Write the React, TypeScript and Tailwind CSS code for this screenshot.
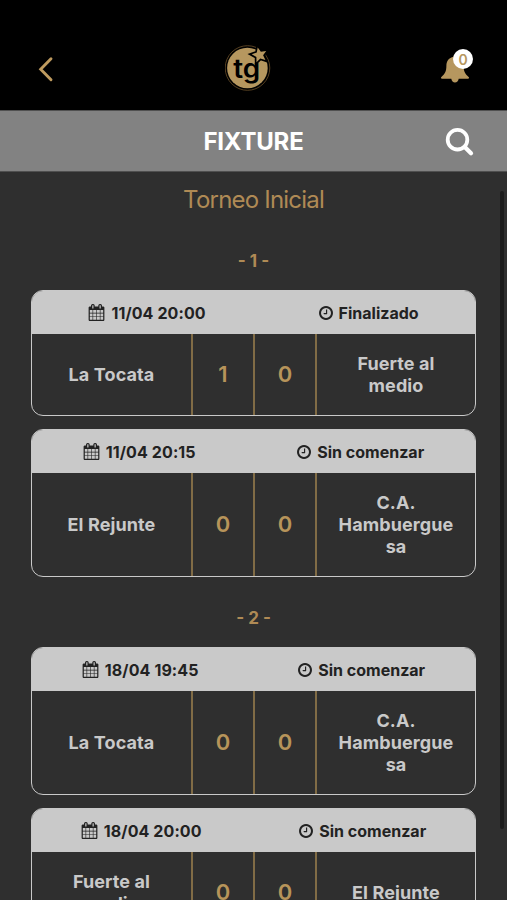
type Match = {
  date: string;
  status: string;
  home: string[];
  away: string[];
  homeGoals: number;
  awayGoals: number;
  bodyClass: string;
};

type Round = {
  id: number;
  matches: Match[];
};

const rounds: Round[] = [
  {
    id: 1,
    matches: [
      {
        date: "11/04 20:00",
        status: "Finalizado",
        home: ["La Tocata"],
        away: ["Fuerte al", "medio"],
        homeGoals: 1,
        awayGoals: 0,
        bodyClass: "h-[81px]",
      },
      {
        date: "11/04 20:15",
        status: "Sin comenzar",
        home: ["El Rejunte"],
        away: ["C.A.", "Hambuergue", "sa"],
        homeGoals: 0,
        awayGoals: 0,
        bodyClass: "h-[103px]",
      },
    ],
  },
  {
    id: 2,
    matches: [
      {
        date: "18/04 19:45",
        status: "Sin comenzar",
        home: ["La Tocata"],
        away: ["C.A.", "Hambuergue", "sa"],
        homeGoals: 0,
        awayGoals: 0,
        bodyClass: "h-[103px]",
      },
      {
        date: "18/04 20:00",
        status: "Sin comenzar",
        home: ["Fuerte al", "medio"],
        away: ["El Rejunte"],
        homeGoals: 0,
        awayGoals: 0,
        bodyClass: "h-[81px]",
      },
    ],
  },
];

const CalendarIcon = () => (
  <svg viewBox="0 0 1792 1792" className="w-[17px] h-[17px] shrink-0 mb-[2px]" fill="currentColor">
    <path d="M192 1664h288v-288h-288v288zm352 0h320v-288h-320v288zm-352-352h288v-320h-288v320zm352 0h320v-320h-320v320zm-352-384h288v-288h-288v288zm736 736h320v-288h-320v288zm-384-736h320v-288h-320v288zm768 736h288v-288h-288v288zm-384-352h320v-320h-320v320zm-352-864v-288q0-13-9.5-22.5t-22.5-9.5h-64q-13 0-22.5 9.5t-9.5 22.5v288q0 13 9.5 22.5t22.5 9.5h64q13 0 22.5-9.5t9.5-22.5zm736 864h288v-320h-288v320zm-384-384h320v-288h-320v288zm384 0h288v-288h-288v288zm32-480v-288q0-13-9.5-22.5t-22.5-9.5h-64q-13 0-22.5 9.5t-9.5 22.5v288q0 13 9.5 22.5t22.5 9.5h64q13 0 22.5-9.5t9.5-22.5zm384-64v1280q0 52-38 90t-90 38h-1408q-52 0-90-38t-38-90v-1280q0-52 38-90t90-38h128v-96q0-66 47-113t113-47h64q66 0 113 47t47 113v96h384v-96q0-66 47-113t113-47h64q66 0 113 47t47 113v96h128q52 0 90 38t38 90z" />
  </svg>
);

const ClockIcon = () => (
  <svg viewBox="128 128 1536 1536" className="w-[14px] h-[14px] shrink-0" fill="currentColor">
    <path d="M1024 544v448q0 14-9 23t-23 9h-320q-14 0-23-9t-9-23v-64q0-14 9-23t23-9h224v-352q0-14 9-23t23-9h64q14 0 23 9t9 23zm416 352q0-148-73-273t-198-198-273-73-273 73-198 198-73 273 73 273 198 198 273 73 273-73 198-198 73-273zm224 0q0 209-103 385.5t-279.5 279.5-385.5 103-385.5-103-279.5-279.5-103-385.5 103-385.5 279.5-279.5 385.5-103 385.5 103 279.5 279.5 103 385.5z" />
  </svg>
);

const STAR =
  "M32.7 2.4 35.9 6.7 41.2 6 38.1 10.3 40.4 15.1 35.3 13.5 31.5 17.2 31.4 11.9 26.7 9.3 31.8 7.6z";

const Logo = () => (
  <svg viewBox="0 0 46 46" className="w-[46px] h-[46px]">
    <circle cx="22.5" cy="23" r="22.3" fill="none" stroke="#6b4f2a" strokeWidth="0.8" />
    <circle cx="22.4" cy="23" r="20.3" fill="#b6975f" />
    <path d={STAR} fill="#000" stroke="#000" strokeWidth="3.4" />
    <path d={STAR} fill="#b6975f" />
    <text
      x="8.2"
      y="32.5"
      textLength="27"
      lengthAdjust="spacingAndGlyphs"
      className="font-['Inter',sans-serif] font-semibold text-[26px]"
      fill="#000"
    >
      tg
    </text>
  </svg>
);

const Header = () => (
  <header className="h-[110px] shrink-0 bg-black pt-[45px] px-[38px] flex items-start justify-between">
    <svg viewBox="0 0 16 26" className="w-4 h-[26px] mt-[11px]" fill="none" stroke="#bf9b5f" strokeWidth="2.9" strokeLinecap="round">
      <path d="M13 2.8 2.7 13.3 13 23.8" />
    </svg>
    <Logo />
    <div className="relative w-7 h-8 mt-[8px]">
      <svg viewBox="0 0 28 30" className="w-7 h-[30px]" fill="#b6975f">
        <path d="M14 2c1 0 1.5.8 1.5 1.8C20 4.8 22.6 8.200 22.600 12.500c0 6 1.500 8.500 5 11.400.8.7.4 1.900-.6 1.900H17.700c-.3 2.200-1.800 3.800-3.700 3.800s-3.400-1.600-3.700-3.800H1c-1 0-1.400-1.200-.6-1.900 3.500-2.900 5-5.400 5-11.400C5.400 8.200 8 4.800 12.500 3.800 12.500 2.800 13 2 14 2z" />
      </svg>
      <span className="absolute left-[12px] -top-[4px] w-[20px] h-[20px] rounded-full bg-white text-[#b6975f] text-[14px] font-semibold leading-[21px] text-center">
        0
      </span>
    </div>
  </header>
);

const TitleBar = () => (
  <div className="h-[62px] shrink-0 bg-[#828282] border-y border-[#505050] grid grid-cols-[1fr_auto_1fr] items-center pt-[2px]">
    <span />
    <h1 className="text-white text-[24px] font-bold tracking-[-0.2px]">FIXTURE</h1>
    <svg viewBox="0 0 30 30" className="w-[30px] h-[30px] justify-self-end mr-[32px]" fill="none" stroke="#fff">
      <circle cx="12.500" cy="12.700" r="9.800" strokeWidth="3.800" />
      <path d="M20 20.200 26 26.200" strokeWidth="4.300" strokeLinecap="round" />
    </svg>
  </div>
);

const TeamName = ({ lines }: { lines: string[] }) => (
  <div className="flex flex-col items-center justify-center text-[#c9c9c9] text-[18px] leading-[22px] font-bold tracking-[0.1px]">
    {lines.map((line) => (
      <span key={line}>{line}</span>
    ))}
  </div>
);

const Goals = ({ value }: { value: number }) => (
  <div className="flex items-center justify-center border-l-2 border-[#816c46] text-[#b7945a] text-[22px] font-semibold">
    {value}
  </div>
);

const MatchCard = ({ match }: { match: Match }) => (
  <div className="rounded-[12px] border border-[#c9c9c9] overflow-hidden shrink-0">
    <div className="h-[43px] pt-px bg-[#c9c9c9] text-[#222] text-[16px] font-bold flex items-center justify-around">
      <div className="flex items-center gap-[6px]">
        <CalendarIcon />
        <span className="tracking-[0.1px]">{match.date}</span>
      </div>
      <div className="flex items-center gap-[6px]">
        <ClockIcon />
        <span>{match.status}</span>
      </div>
    </div>
    <div className={`grid grid-cols-[159px_62px_62px_1fr] ${match.bodyClass}`}>
      <TeamName lines={match.home} />
      <Goals value={match.homeGoals} />
      <Goals value={match.awayGoals} />
      <div className="border-l-2 border-[#816c46] flex items-center justify-center">
        <TeamName lines={match.away} />
      </div>
    </div>
  </div>
);

export default function App() {
  return (
    <div className="relative w-[507px] h-[900px] overflow-hidden bg-[#2f2f2f] font-['Inter',sans-serif] flex flex-col">
      <Header />
      <TitleBar />
      <main className="flex-1 min-h-0 overflow-hidden pl-[31px] pr-[31px]">
        <h2 className="pt-[12px] pb-[4px] text-center text-[#af8a55] text-[24px] leading-8 tracking-[-0.8px]">
          Torneo Inicial
        </h2>
        {rounds.map((round) => (
          <section key={round.id} className="pt-[26px]">
            <h3 className="h-[30px] text-center text-[#af8a55] text-[17px] leading-[31px] font-bold">
              - {round.id} -
            </h3>
            <div className="mt-[14px] flex flex-col gap-[13px]">
              {round.matches.map((match) => (
                <MatchCard key={match.date} match={match} />
              ))}
            </div>
          </section>
        ))}
      </main>
      {/* Scroll thumb */}
      <div className="absolute right-[3px] top-[191px] w-[4px] h-[638px] rounded-full bg-[#1c1c1c]" />
    </div>
  );
}
